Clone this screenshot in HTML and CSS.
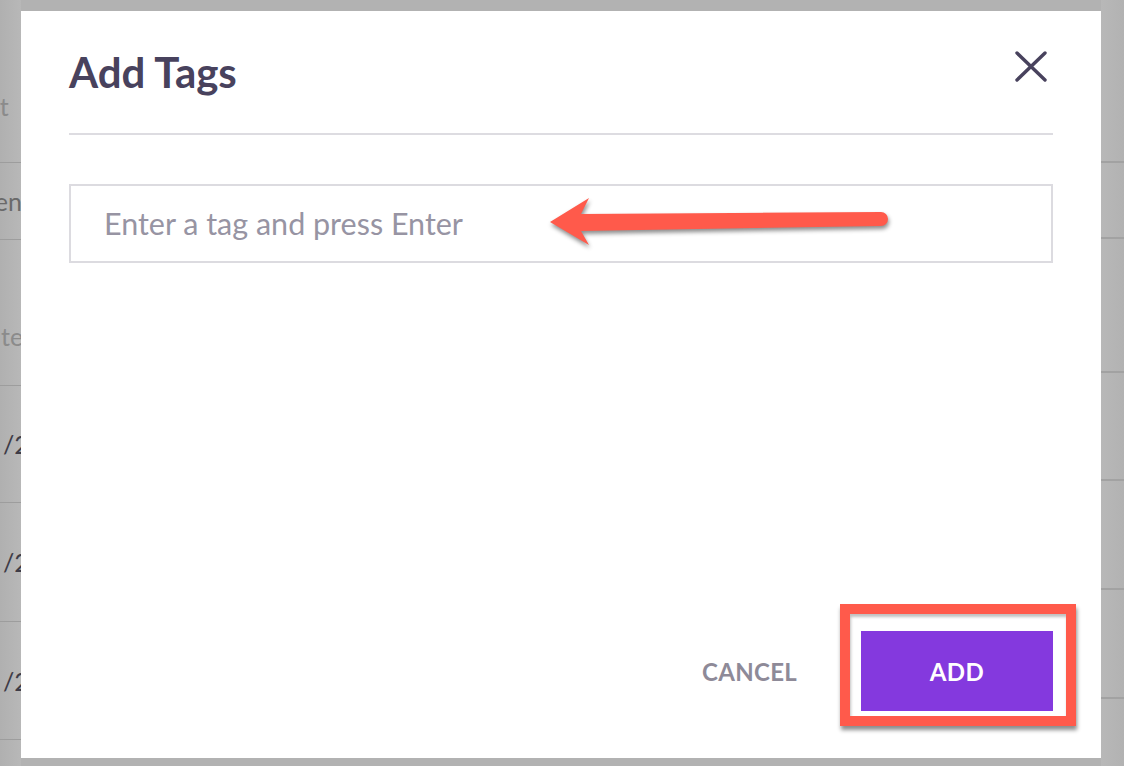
FILE: index.html
```html
<!DOCTYPE html>
<html>
<head>
<meta charset="utf-8">
<link rel="stylesheet" href="styles.css">
</head>
<body>
<div class="screen">
  <div class="strip strip-left">
    <div class="row r1"><span class="bg-text muted">st</span></div>
    <div class="row r2"><span class="bg-text mid">Ten</span></div>
    <div class="row r3"><span class="bg-text muted">ted</span></div>
    <div class="row r4"><span class="bg-text dark">1 /2020</span></div>
    <div class="row r5"><span class="bg-text dark">1 /2020</span></div>
    <div class="row r6"><span class="bg-text dark">1 /2020</span></div>
    <div class="row r7"></div>
  </div>
  <div class="center">
    <div class="modal">
      <div class="modal-header">
        <h1 class="modal-title">Add Tags</h1>
        <button class="close-btn" aria-label="Close">
          <svg width="32" height="31" viewBox="0 0 32 31"><path d="M2 2 L30 29 M30 2 L2 29" stroke="#48425d" stroke-width="3.4" stroke-linecap="round" fill="none"/></svg>
        </button>
      </div>
      <div class="modal-body">
        <input class="tag-input" type="text" placeholder="Enter a tag and press Enter">
        <svg class="annot-arrow" width="350" height="66" viewBox="545 190 350 66"><path d="M550 222 L589 198 L581 214 L881 212 A7 7 0 0 1 881 226 L581 231 L589 245 Z" fill="#ff5a4b"/></svg>
      </div>
      <div class="modal-footer">
        <button class="btn-cancel">CANCEL</button>
        <div class="add-wrap">
          <button class="btn-add">ADD</button>
          <div class="annot-box"></div>
        </div>
      </div>
    </div>
  </div>
  <div class="strip strip-right">
    <div class="row q1"></div>
    <div class="row q2"></div>
    <div class="row q3"></div>
    <div class="row q4"></div>
    <div class="row q5"></div>
    <div class="row q6"></div>
    <div class="row q7"></div>
  </div>
</div>
</body>
</html>
```
FILE: styles.css
```css
html, body {
  margin: 0;
  padding: 0;
}
body {
  background: #b2b2b2;
  font-family: "Lato", "Liberation Sans", sans-serif;
  width: 1124px;
  height: 766px;
  overflow: hidden;
}
.screen {
  display: flex;
  height: 766px;
}
.strip {
  display: flex;
  flex-direction: column;
  padding-top: 16px;
  box-sizing: border-box;
  height: 766px;
  overflow: hidden;
}
.strip-left {
  width: 21px;
  background: linear-gradient(90deg, #b0b0b0, #b8b8b8);
}
.strip-right {
  width: 23px;
  background: linear-gradient(90deg, #b8b8b8, #b2b2b2);
}
.row {
  box-sizing: border-box;
  flex: none;
  display: flex;
  align-items: center;
  overflow: hidden;
  white-space: nowrap;
}
.strip-left .row { border-bottom: 1px solid #9d9d9d; }
.strip-right .row { border-bottom: 2px solid #a2a2a2; }
.row:last-child { border-bottom: none; flex: 1; }
.r1 { height: 147px; align-items: flex-start; padding-top: 76px; }
.r2 { height: 77px; }
.r3 { height: 146px; align-items: flex-start; padding-top: 82px; }
.r4 { height: 117px; }
.r5 { height: 119px; }
.r6 { height: 118px; }

.q1 { height: 147px; }
.q2 { height: 76px; }
.q3 { height: 134px; }
.q4 { height: 108px; }
.q5 { height: 109px; }
.q6 { height: 109px; }

.bg-text {
  font-size: 25px;
  line-height: 28px;
}
.r1 .bg-text { margin-left: -11px; }
.r2 .bg-text { margin-left: -17px; }
.r3 .bg-text { margin-left: 1px; }
.r4 .bg-text, .r5 .bg-text, .r6 .bg-text { margin-left: -18px; }
.muted { color: #8b8b8b; }
.mid { color: #6a6a6a; }
.dark { color: #3e3c47; }

.center {
  width: 1080px;
  padding: 11px 0 8px;
  box-sizing: border-box;
  display: flex;
}
.modal {
  flex: 1;
  background: #ffffff;
  display: flex;
  flex-direction: column;
  padding: 0 48px 47px;
  position: relative;
}
.modal-header {
  display: flex;
  justify-content: space-between;
  align-items: flex-start;
  height: 124px;
  box-sizing: border-box;
  border-bottom: 2px solid #dddce1;
}
.modal-title {
  margin: 0;
  padding-top: 37px;
  font-size: 42px;
  line-height: 48px;
  font-weight: 700;
  color: #48425d;
}
.close-btn {
  border: none;
  background: none;
  padding: 0;
  margin: 40px 6px 0 0;
  width: 32px;
  height: 31px;
  cursor: pointer;
}
.close-btn svg { display: block; }
.modal-body {
  flex: 1;
  padding-top: 49px;
}
.tag-input {
  display: block;
  width: 100%;
  height: 79px;
  box-sizing: border-box;
  border: 2px solid #dcdbe0;
  padding: 0 0 2px 33px;
  font-family: "Lato", "Liberation Sans", sans-serif;
  font-size: 30.5px;
  color: #48425d;
  outline: none;
}
.tag-input::placeholder { color: #9794a3; }
.annot-arrow {
  position: absolute;
  left: 524px;
  top: 179px;
  filter: drop-shadow(1px 3px 2px rgba(0,0,0,0.45));
}
.modal-footer {
  display: flex;
  justify-content: flex-end;
  align-items: center;
}
.btn-cancel {
  border: none;
  background: none;
  font-family: "Lato", "Liberation Sans", sans-serif;
  font-weight: 700;
  font-size: 24px;
  color: #8e8a98;
  padding: 0;
  margin-right: 64px;
  letter-spacing: 0.3px;
}
.add-wrap {
  position: relative;
}
.btn-add {
  display: block;
  border: none;
  width: 192px;
  height: 80px;
  background: #8439de;
  color: #ffffff;
  font-family: "Lato", "Liberation Sans", sans-serif;
  font-weight: 700;
  font-size: 24px;
  letter-spacing: 0.5px;
}
.annot-box {
  position: absolute;
  left: -21px;
  top: -27px;
  right: -23px;
  bottom: -15px;
  border: 10px solid #ff5a4b;
  box-shadow: 1px 4px 4px rgba(0,0,0,0.45), inset 1px 3px 3px rgba(0,0,0,0.25);
}
```
